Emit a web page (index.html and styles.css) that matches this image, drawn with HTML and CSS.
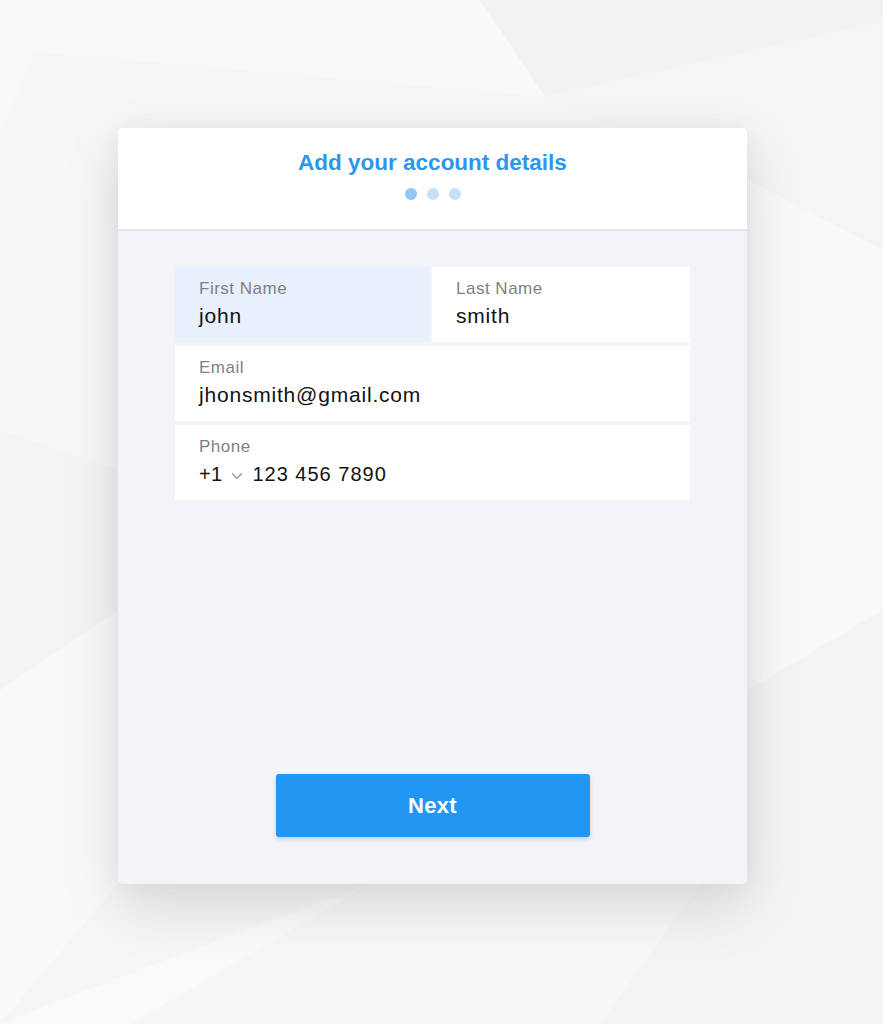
FILE: index.html
```html
<!DOCTYPE html>
<html lang="en">
<head>
<meta charset="utf-8">
<title>Add your account details</title>
<link rel="stylesheet" href="styles.css">
</head>
<body>
<svg class="backdrop" viewBox="0 0 883 1024" preserveAspectRatio="none" aria-hidden="true">
  <rect width="883" height="1024" fill="#f5f6f8"/>
  <polygon points="0,0 480,0 545,97 35,52" fill="#f8f9fa"/>
  <polygon points="480,0 883,0 883,22 545,97" fill="#f2f2f3"/>
  <polygon points="545,97 883,22 883,250 748,180" fill="#f5f5f6"/>
  <polygon points="748,180 883,250 883,610 748,690" fill="#f8f9fb"/>
  <polygon points="748,690 883,610 883,1024 600,1024 700,884" fill="#f4f4f5"/>
  <polygon points="0,0 35,52 0,135" fill="#f8f9fa"/>
  <polygon points="0,135 35,52 118,240 118,470 0,430" fill="#f6f7f9"/>
  <polygon points="0,430 118,470 118,610 0,690" fill="#f3f4f5"/>
  <polygon points="0,690 118,610 118,884 0,1024" fill="#f8f9fa"/>
  <polygon points="0,1024 360,884 700,884 600,1024" fill="#f6f7f9"/>
  <polygon points="0,1024 60,1000 370,884 130,1024" fill="#f9fafb"/>
</svg>

<main class="stage">
  <section class="card">
    <header class="card-head">
      <h1 class="title">Add your account details</h1>
      <div class="steps">
        <span class="dot dot-active"></span>
        <span class="dot"></span>
        <span class="dot"></span>
      </div>
    </header>

    <div class="card-body">
      <form class="form">
        <div class="row row-split">
          <label class="field field-focus">
            <span class="label">First Name</span>
            <span class="value">john</span>
          </label>
          <label class="field">
            <span class="label">Last Name</span>
            <span class="value">smith</span>
          </label>
        </div>
        <label class="field">
          <span class="label">Email</span>
          <span class="value">jhonsmith@gmail.com</span>
        </label>
        <label class="field">
          <span class="label">Phone</span>
          <span class="value phone">
            <span class="code">+1</span>
            <svg class="chev" viewBox="0 0 12 8" aria-hidden="true"><path d="M1.5 1.8 L6 6.2 L10.5 1.8" fill="none" stroke="#9a9a9a" stroke-width="1.4" stroke-linecap="round" stroke-linejoin="round"/></svg>
            <span class="num">123 456 7890</span>
          </span>
        </label>
      </form>

      <button class="next" type="button">Next</button>
    </div>
  </section>
</main>
</body>
</html>
```

FILE: styles.css
```css
html, body {
  margin: 0;
  padding: 0;
}

body {
  min-height: 1024px;
  background: #f5f6f8;
  font-family: "Liberation Sans", Arial, "Helvetica Neue", sans-serif;
  position: relative;
}

.backdrop {
  position: absolute;
  left: 0;
  top: 0;
  width: 100%;
  height: 1024px;
  display: block;
  z-index: 0;
}

.stage {
  position: relative;
  z-index: 1;
  padding-top: 128px;
  padding-left: 118px;
}

.card {
  width: 629px;
  height: 756px;
  border-radius: 5px;
  background: #f3f4f8;
  box-shadow: 0 22px 60px rgba(0, 0, 0, 0.13), 0 0 24px rgba(0, 0, 0, 0.04);
  display: flex;
  flex-direction: column;
  overflow: hidden;
}

.card-head {
  height: 103px;
  box-sizing: border-box;
  background: #ffffff;
  border-bottom: 2px solid #e3e5ea;
  padding-top: 22px;
  display: flex;
  flex-direction: column;
  align-items: center;
}

.title {
  margin: 0;
  font-size: 22.5px;
  line-height: 26px;
  font-weight: 700;
  color: #2b96ea;
  letter-spacing: 0;
}

.steps {
  margin-top: 12px;
  display: flex;
  gap: 10px;
}

.dot {
  width: 12px;
  height: 12px;
  border-radius: 50%;
  background: #c5e0f9;
}

.dot-active {
  background: #91c5f5;
}

.card-body {
  flex: 1;
  padding: 36px 57px 47px;
  display: flex;
  flex-direction: column;
  align-items: center;
}

.form {
  width: 515px;
  display: flex;
  flex-direction: column;
  gap: 4px;
}

.row-split {
  display: grid;
  grid-template-columns: 255px 258px;
  column-gap: 2px;
}

.field {
  height: 75px;
  box-sizing: border-box;
  padding: 12px 24px 0;
  background: #ffffff;
  display: flex;
  flex-direction: column;
}

.field-focus {
  background: #e8f0fd;
}

.label {
  font-size: 17px;
  line-height: 20px;
  color: #7f7f84;
  letter-spacing: 0.5px;
}

.value {
  margin-top: 4px;
  font-size: 21px;
  line-height: 26px;
  color: #111111;
  letter-spacing: 0.8px;
}

.phone {
  display: flex;
  align-items: center;
  font-size: 20px;
  letter-spacing: 0.3px;
}

.chev {
  width: 12px;
  height: 8px;
  margin: 4px 9px 0 9px;
}

.num {
  letter-spacing: 1px;
}

.next {
  margin-top: auto;
  width: 314px;
  height: 63px;
  border: none;
  border-radius: 3px;
  background: #2196f3;
  color: #ffffff;
  font-family: "Liberation Sans", Arial, sans-serif;
  font-size: 22px;
  font-weight: 700;
  letter-spacing: 0.3px;
  box-shadow: 0 2px 4px rgba(0, 0, 0, 0.16);
  cursor: pointer;
}
```
